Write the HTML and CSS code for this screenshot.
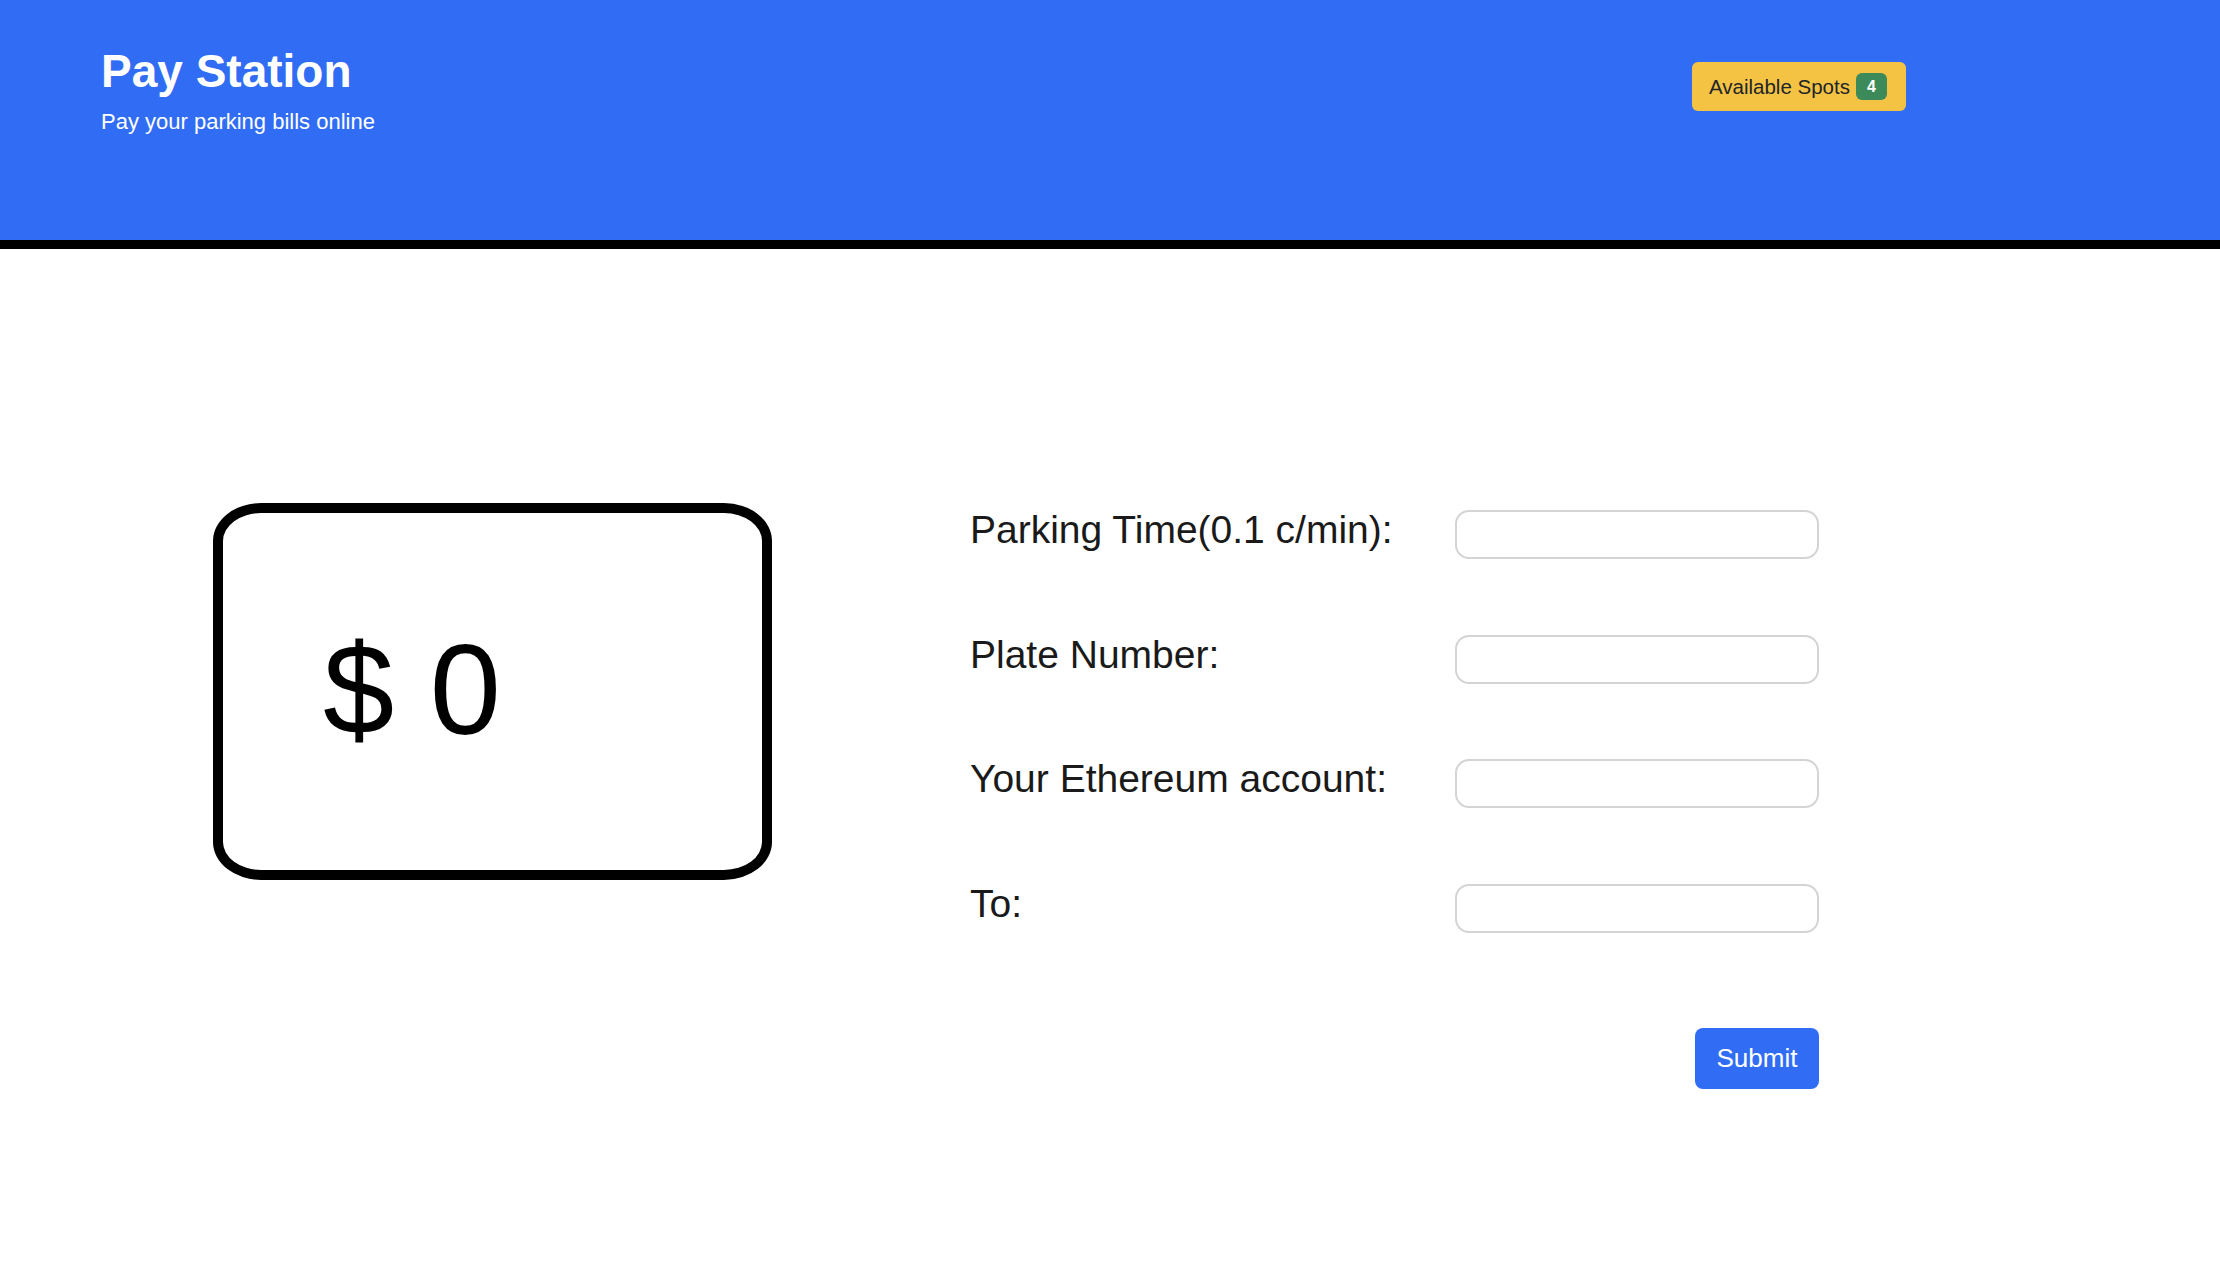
FILE: index.html
```html
<!DOCTYPE html>
<html lang="en">
<head>
<meta charset="utf-8">
<title>Pay Station</title>
<link rel="stylesheet" href="styles.css">
</head>
<body>
<header class="header">
  <div class="brand">
    <h1 class="title">Pay Station</h1>
    <p class="subtitle">Pay your parking bills online</p>
  </div>
  <div class="spots">Available Spots <span class="spots-count">4</span></div>
</header>
<main class="main">
  <div class="amount-box"><span class="amount">$ 0</span></div>
  <form class="pay-form">
    <label class="label" for="time">Parking Time(0.1 c/min):</label>
    <input class="field" id="time" type="text">
    <label class="label" for="plate">Plate Number:</label>
    <input class="field" id="plate" type="text">
    <label class="label" for="account">Your Ethereum account:</label>
    <input class="field" id="account" type="text">
    <label class="label" for="to">To:</label>
    <input class="field" id="to" type="text">
    <button class="submit" type="button">Submit</button>
  </form>
</main>
</body>
</html>
```
FILE: styles.css
```css
* { box-sizing: border-box; }
html, body { margin: 0; padding: 0; background: #ffffff; }
body {
  font-family: "Liberation Sans", Arial, sans-serif;
  color: #1a1a1a;
  width: 2220px;
  height: 1262px;
  overflow: hidden;
}
.header {
  height: 249px;
  background: #316df4;
  border-bottom: 9px solid #000;
  display: flex;
  justify-content: space-between;
  align-items: flex-start;
  padding: 45px 314px 0 101px;
}
.title {
  margin: 0;
  font-size: 46px;
  font-weight: 700;
  color: #fff;
  line-height: 1.149;
}
.subtitle {
  margin: 11px 0 0 0;
  font-size: 22px;
  color: #fff;
  line-height: 1.149;
}
.spots {
  margin-top: 17px;
  height: 49px;
  width: 214px;
  background: #f5c344;
  border-radius: 6px;
  display: flex;
  align-items: center;
  padding: 0 17px;
  gap: 6px;
  font-size: 20.5px;
  color: #212529;
  white-space: nowrap;
}
.spots-count {
  width: 31px;
  height: 27px;
  border-radius: 6px;
  background: #3c8a5a;
  color: #fff;
  font-weight: 700;
  font-size: 16px;
  display: flex;
  align-items: center;
  justify-content: center;
}
.main {
  display: flex;
  align-items: flex-start;
  padding: 254px 0 0 213px;
  gap: 198px;
}
.amount-box {
  width: 559px;
  height: 377px;
  border: 10px solid #000;
  border-radius: 48px / 38px;
  display: flex;
  align-items: center;
  padding-left: 100px;
}
.amount {
  font-size: 128px;
  line-height: 1;
  color: #000;
  font-weight: 400;
  margin-top: -4px;
}
.pay-form {
  margin-top: 7px;
  display: grid;
  grid-template-columns: 485px 364px;
  row-gap: 75.6px;
  align-items: start;
}
.label {
  font-size: 39px;
  line-height: 1;
  color: #1a1a1a;
}
.field {
  width: 364px;
  height: 49px;
  border: 2px solid #d4d4d4;
  border-radius: 14px;
  background: #fff;
  font-size: 20px;
  padding: 0 14px;
  outline: none;
}
.submit {
  grid-column: 2;
  justify-self: end;
  margin-top: 20px;
  width: 124px;
  height: 61px;
  background: #316df4;
  color: #fff;
  border: none;
  border-radius: 8px;
  font-family: "Liberation Sans", Arial, sans-serif;
  font-size: 26px;
  padding: 0;
}
```
